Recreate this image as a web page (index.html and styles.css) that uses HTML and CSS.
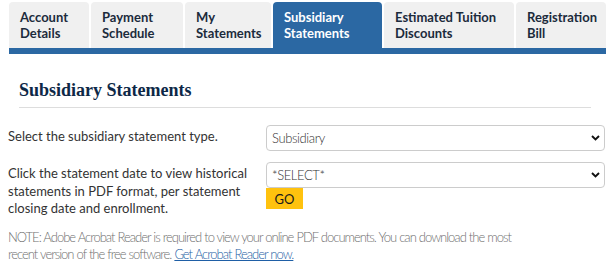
FILE: index.html
```html
<!DOCTYPE html>
<html lang="en">
<head>
<meta charset="utf-8">
<title>Subsidiary Statements</title>
<link rel="stylesheet" href="styles.css">
</head>
<body>
<div class="page">
  <nav class="tabs">
    <a class="tab" href="#">Account<br>Details</a>
    <a class="tab" href="#">Payment<br>Schedule</a>
    <a class="tab" href="#">My<br>Statements</a>
    <a class="tab tab-active" href="#">Subsidiary<br>Statements</a>
    <a class="tab" href="#">Estimated Tuition<br>Discounts</a>
    <a class="tab" href="#">Registration<br>Bill</a>
  </nav>
  <section class="panel">
    <h2 class="title">Subsidiary Statements</h2>
    <div class="form-row">
      <label class="label" for="type">Select the subsidiary statement type.</label>
      <div class="control">
        <div class="select-wrap">
          <select id="type" class="select"><option>Subsidiary</option></select>
          <svg class="chev" width="9" height="6" viewBox="0 0 9 6"><path d="M1 1 L4.5 4.5 L8 1" fill="none" stroke="#111" stroke-width="1.9"/></svg>
        </div>
      </div>
    </div>
    <div class="form-row">
      <label class="label" for="date">Click the statement date to view historical statements in PDF format, per statement closing date and enrollment.</label>
      <div class="control">
        <div class="select-wrap">
          <select id="date" class="select"><option>*SELECT*</option></select>
          <svg class="chev" width="9" height="6" viewBox="0 0 9 6"><path d="M1 1 L4.5 4.5 L8 1" fill="none" stroke="#111" stroke-width="1.9"/></svg>
        </div>
        <button class="go" type="button">GO</button>
      </div>
    </div>
    <p class="note">NOTE: Adobe Acrobat Reader is required to view your online PDF documents. You can download the most recent version of the free software. <a class="note-link" href="#">Get Acrobat Reader now.</a></p>
  </section>
</div>
</body>
</html>
```

FILE: styles.css
```css
html, body {
  margin: 0;
  padding: 0;
  background: #ffffff;
}

body {
  font-family: "Lato", "Noto Sans", sans-serif;
  color: #333333;
}

.page {
  padding: 2px 5px 0 8px;
}

.tabs {
  display: grid;
  grid-template-columns: 80px 92px 86px 109px 130px 90px;
  column-gap: 2px;
  margin-left: 1px;
  border-bottom: 6px solid #2b68a3;
}

.tab {
  display: block;
  height: 46px;
  box-sizing: border-box;
  padding: 7px 6px 0 11px;
  background: #f0f0f0;
  border-radius: 4px 4px 0 0;
  color: #1c2b3c;
  font-family: "Lato", "Noto Sans", sans-serif;
  font-weight: 700;
  font-size: 13px;
  line-height: 16px;
  text-decoration: none;
}

.tab-active {
  background: #2b68a3;
  color: #ffffff;
}

.panel {
  padding: 0;
}

.title {
  margin: 25px 15px 17px 11px;
  padding: 0 0 6px 0;
  border-bottom: 1px solid #dddddd;
  font-family: "Liberation Serif", "Times New Roman", serif;
  font-weight: 700;
  font-size: 18px;
  line-height: 22px;
  color: #0d2847;
}

.form-row {
  display: grid;
  grid-template-columns: 258px 339px;
  align-items: start;
  margin-bottom: 11px;
}

.label {
  display: block;
  padding: 3px 10px 0 0;
  font-size: 13px;
  line-height: 17.5px;
  color: #333333;
}

.control {
  display: flex;
  flex-direction: column;
  align-items: flex-start;
}

.select-wrap {
  position: relative;
  width: 100%;
}

.select {
  display: block;
  width: 100%;
  height: 26px;
  margin: 0;
  padding: 0 20px 0 5px;
  box-sizing: border-box;
  border: 1px solid #cccccc;
  border-radius: 4px;
  background: #ffffff;
  font-family: "Lato", "Noto Sans", sans-serif;
  font-weight: 300;
  font-size: 13px;
  letter-spacing: -0.4px;
  color: #333333;
  -webkit-appearance: none;
  appearance: none;
}

.chev {
  position: absolute;
  right: 5px;
  top: 10px;
  pointer-events: none;
}

.go {
  width: 37px;
  height: 21px;
  margin: 0;
  padding: 0;
  border: none;
  border-radius: 0;
  background: #ffc20e;
  color: #1a1a1a;
  font-family: "Lato", "Noto Sans", sans-serif;
  font-size: 13px;
  font-weight: 400;
}

.note {
  max-width: 520px;
  margin: 1px 0 0 0;
  font-weight: 300;
  font-size: 13px;
  line-height: 17.5px;
  letter-spacing: -1px;
  word-spacing: 0.5px;
  color: #707070;
}

.note-link {
  color: #1f5fa6;
  text-decoration: underline;
}
```
